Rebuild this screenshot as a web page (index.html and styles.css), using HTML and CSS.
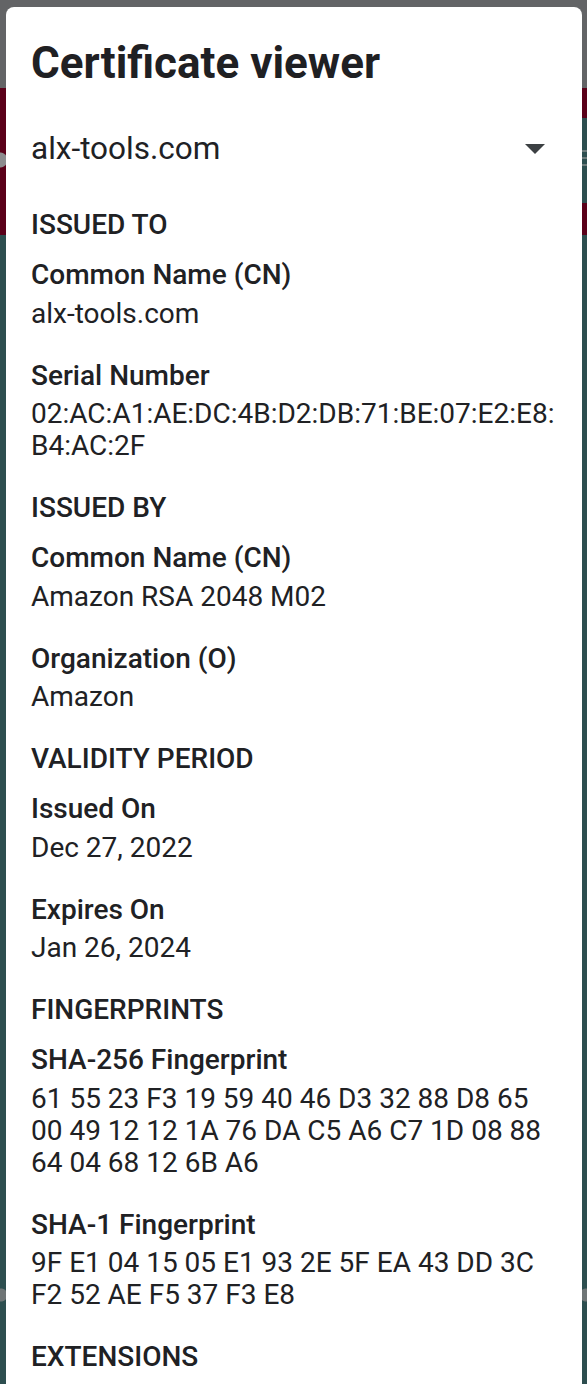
FILE: index.html
```html
<!DOCTYPE html>
<html lang="en">
<head>
<meta charset="utf-8">
<title>Certificate viewer</title>
<link rel="stylesheet" href="styles.css">
</head>
<body>
<div class="screen">
  <div class="dialog">
    <h1 class="title">Certificate viewer</h1>
    <div class="picker">
      <span class="picker-text">alx-tools.com</span>
      <svg class="picker-arrow" width="20" height="10" viewBox="0 0 20 10" aria-hidden="true"><path d="M0 0H20L10 10Z"/></svg>
    </div>

    <section class="group">
      <h2 class="group-title">ISSUED TO</h2>
      <div class="field">
        <div class="label">Common Name (CN)</div>
        <div class="value">alx-tools.com</div>
      </div>
      <div class="field">
        <div class="label">Serial Number</div>
        <div class="value">02:AC:A1:AE:DC:4B:D2:DB:71:BE:07:E2:E8:<br>B4:AC:2F</div>
      </div>
    </section>

    <section class="group">
      <h2 class="group-title">ISSUED BY</h2>
      <div class="field">
        <div class="label">Common Name (CN)</div>
        <div class="value">Amazon RSA 2048 M02</div>
      </div>
      <div class="field">
        <div class="label">Organization (O)</div>
        <div class="value">Amazon</div>
      </div>
    </section>

    <section class="group">
      <h2 class="group-title">VALIDITY PERIOD</h2>
      <div class="field">
        <div class="label">Issued On</div>
        <div class="value">Dec 27, 2022</div>
      </div>
      <div class="field">
        <div class="label">Expires On</div>
        <div class="value">Jan 26, 2024</div>
      </div>
    </section>

    <section class="group">
      <h2 class="group-title">FINGERPRINTS</h2>
      <div class="field">
        <div class="label">SHA-256 Fingerprint</div>
        <div class="value">61 55 23 F3 19 59 40 46 D3 32 88 D8 65 00 49 12 12 1A 76 DA C5 A6 C7 1D 08 88 64 04 68 12 6B A6</div>
      </div>
      <div class="field">
        <div class="label">SHA-1 Fingerprint</div>
        <div class="value">9F E1 04 15 05 E1 93 2E 5F EA 43 DD 3C F2 52 AE F5 37 F3 E8</div>
      </div>
    </section>

    <section class="group">
      <h2 class="group-title">EXTENSIONS</h2>
    </section>
  </div>
</div>
</body>
</html>
```

FILE: styles.css
```css
* { box-sizing: border-box; }

html, body {
  margin: 0;
  padding: 0;
}

body {
  font-family: Roboto, "Noto Sans", "Liberation Sans", sans-serif;
  color: #202124;
}

.screen {
  height: 1384px;
  overflow: hidden;
  display: flex;
  flex-direction: column;
  padding: 7px 5px 0 6px;
  background:
    radial-gradient(circle at 0px 160px, #8d8d8f 0 7px, transparent 8px),
    radial-gradient(circle at 1px 1295px, #6f7576 0 6px, transparent 7px),
    radial-gradient(circle at 586px 1295px, #6f7576 0 6px, transparent 7px),
    linear-gradient(to bottom, transparent 0 150px, #6d7b7b 150px 152px, transparent 152px 157px, #6d7b7b 157px 159px, transparent 159px 164px, #6d7b7b 164px 166px, transparent 166px) right top / 5px 100% no-repeat,
    linear-gradient(to bottom, #636466 0 88px, #5a0019 88px 118px, #2d4e4f 118px 203px, #5a0019 203px 235px, #2d4e4f 235px) right top / 5px 100% no-repeat,
    linear-gradient(to bottom, #636466 0 88px, #5a0019 88px 235px, #2d4e4f 235px);
}

.dialog {
  flex: 1;
  background: #ffffff;
  border-radius: 8px 8px 0 0;
  padding: 32px 24px 0 25px;
}

.title {
  margin: 0;
  font-size: 44px;
  line-height: 48px;
  font-weight: 700;
  color: #1f2023;
}

.picker {
  display: flex;
  align-items: center;
  justify-content: space-between;
  height: 60px;
  margin-top: 32px;
  margin-bottom: 1px;
  padding-right: 13px;
}

.picker-text {
  font-size: 31.5px;
  line-height: 36px;
}

.picker-arrow {
  fill: #3c4043;
  display: block;
}

.group {
  margin-top: 30px;
}

.group-title {
  margin: 0;
  font-size: 28px;
  line-height: 32px;
  font-weight: 500;
}

.field {
  margin-top: 18px;
}

.field + .field {
  margin-top: 30px;
}

.label {
  font-size: 28px;
  line-height: 32px;
  font-weight: 500;
}

.value {
  margin-top: 6.5px;
  font-size: 28px;
  line-height: 32px;
  font-weight: 400;
}
```
